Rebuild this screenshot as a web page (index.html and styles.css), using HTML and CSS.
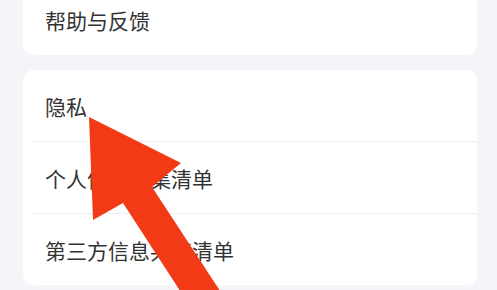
FILE: index.html
```html
<!DOCTYPE html>
<html lang="zh-CN">
<head>
    <meta charset="UTF-8">
    <meta name="viewport" content="width=device-width, initial-scale=1.0">
    <title>设置</title>
    <link rel="stylesheet" href="styles.css">
</head>
<body>
    <div class="page">
        <div class="card card-top">
            <div class="row">帮助与反馈</div>
        </div>

        <div class="card">
            <div class="row">隐私</div>
            <div class="divider"></div>
            <div class="row">个人信息收集清单</div>
            <div class="divider"></div>
            <div class="row">第三方信息共享清单</div>
        </div>
    </div>

    <!-- annotation arrow drawn over the list -->
    <svg class="arrow" width="497" height="290" viewBox="0 0 497 290">
        <polygon points="89,117 181,163 152,187 226,300 186,300 123,203 93,220" fill="#f23a17"/>
    </svg>
</body>
</html>
```

FILE: styles.css
```css
body {
    margin: 0;
    background-color: #f3f5f8;
    font-family: "Noto Sans CJK SC", "Noto Sans", sans-serif;
    color: #333;
    overflow: hidden;
}

.page {
    padding: 0 20px 0 23px;
}

.card {
    background-color: #fff;
    border-radius: 10px;
    margin-bottom: 15px;
}

.card-top {
    margin-top: -15px;
}

.card-top .row {
    height: 70px;
}

.row {
    height: 71px;
    display: flex;
    align-items: center;
    padding-left: 22px;
    font-size: 21px;
}

.divider {
    height: 1px;
    margin: 0 0 0 9px;
    background-color: #eceef1;
}

.arrow {
    position: absolute;
    left: 0;
    top: 0;
}
```
